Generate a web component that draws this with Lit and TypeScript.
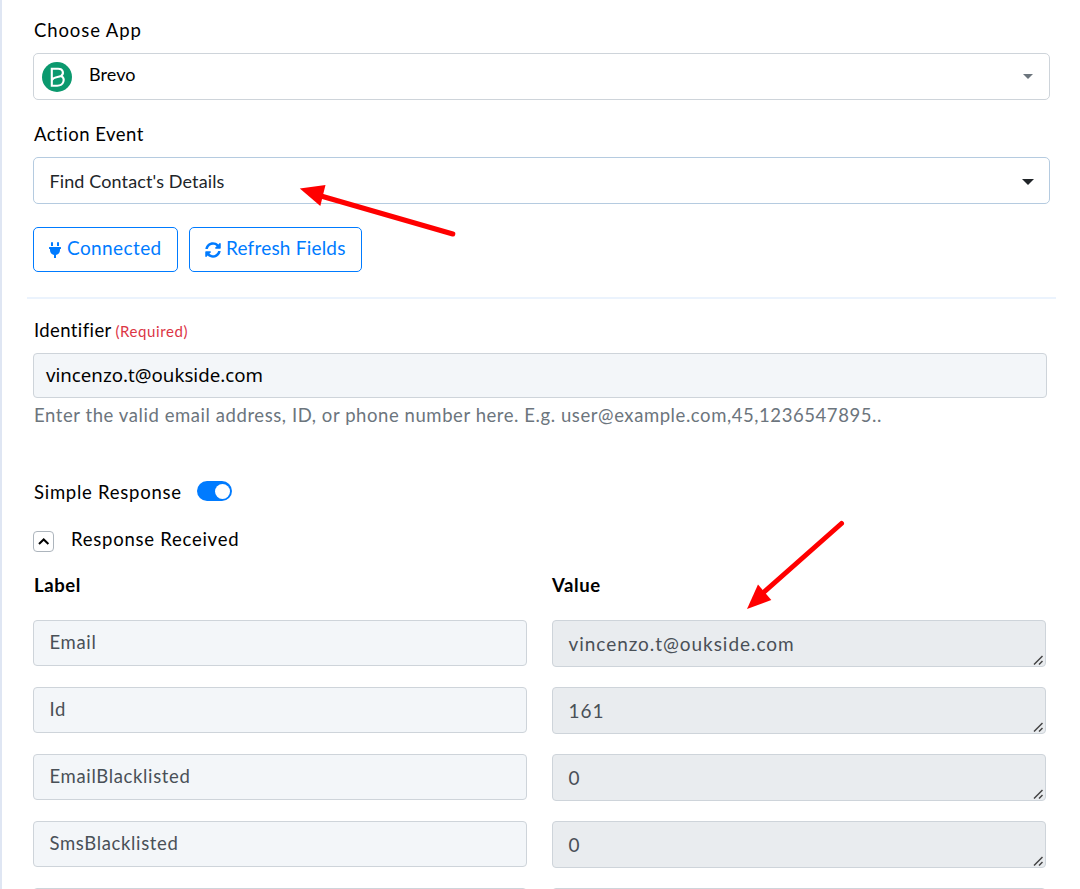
// lit
import { LitElement, html, css, svg } from 'lit';
import { customElement, property } from 'lit/decorators.js';

const RESPONSE = [
  { label: 'Email', value: 'vincenzo.t@oukside.com' },
  { label: 'Id', value: '161' },
  { label: 'EmailBlacklisted', value: '0' },
  { label: 'SmsBlacklisted', value: '0' },
  { label: '', value: '' },
];

// one label / value pair of the response
@customElement('response-row')
export class ResponseRow extends LitElement {
  @property() label = '';
  @property() value = '';

  static styles = css`
    :host {
      display: grid;
      grid-template-columns: 494px 494px;
      column-gap: 25px;
      align-items: start;
      height: 67px;
      color: #495057;
    }
    .label,
    .value {
      box-sizing: border-box;
      border: 1px solid #ced4da;
      border-radius: 4px;
      padding: 0 15.5px;
      white-space: nowrap;
    }
    .label {
      height: 46px;
      line-height: 43px;
      font-size: 18.5px;
      letter-spacing: 0.65px;
      background: #f3f6f9;
    }
    .value {
      position: relative;
      height: 47px;
      line-height: 45px;
      font-size: 19px;
      letter-spacing: 0.95px;
      background: #e9ecef;
    }
    .grip {
      position: absolute;
      right: 2px;
      bottom: 1px;
      width: 10px;
      height: 10px;
    }
  `;

  render() {
    return html`
      <div class="label">${this.label}</div>
      <div class="value">
        ${this.value}
        <svg class="grip" viewBox="0 0 10 10">
          <path d="M1 9.5 9.5 1M6 9.5 9.5 6" fill="none" stroke="#444" stroke-width="1.5" />
        </svg>
      </div>
    `;
  }
}

@customElement('app-root')
export class AppRoot extends LitElement {
  static styles = css`
    :host {
      display: block;
      position: relative;
      box-sizing: border-box;
      height: 889px;
      overflow: hidden;
      padding: 17px 30px 0 31px;
      border-left: 2px solid #dfe6f3;
      background: #fff;
      color: #000;
      font-family: Lato, 'Liberation Sans', sans-serif;
      font-size: 18.5px;
      line-height: 27px;
      letter-spacing: 0.75px;
    }
    .field-label {
      margin-bottom: 9px;
      padding-left: 1px;
      white-space: nowrap;
    }
    .app-label {
      letter-spacing: 0.9px;
    }
    .event-label {
      letter-spacing: 0.5px;
    }
    .identifier-label {
      position: relative;
      top: 1px;
      letter-spacing: 0.4px;
    }
    .required {
      margin-left: -1px;
      font-size: 15px;
      letter-spacing: 0.6px;
      color: #dc3545;
    }
    .select {
      display: flex;
      align-items: center;
      box-sizing: border-box;
      height: 47px;
      margin-bottom: 21px;
      padding: 0 15px 0 8px;
      border: 1px solid #ced4da;
      border-radius: 5px;
    }
    .select.event {
      margin-bottom: 23px;
      padding: 2px 15px 0 15.5px;
      border-color: #b5cbe0;
      color: #212529;
    }
    .select span {
      flex: 1;
    }
    .app-name {
      padding: 0 0 4px 17px;
      font-size: 18px;
      letter-spacing: 0.1px;
    }
    .event-name {
      font-size: 18px;
      letter-spacing: 0.12px;
    }
    .logo {
      width: 30px;
      height: 30px;
    }
    .caret {
      width: 12px;
      height: 6px;
      fill: #6c757d;
    }
    .event .caret {
      fill: #212529;
    }
    .buttons {
      display: flex;
      gap: 11px;
    }
    .btn {
      display: flex;
      align-items: center;
      box-sizing: border-box;
      height: 45px;
      padding: 0 0 3px 15px;
      border: 1px solid #007bff;
      border-radius: 5px;
      color: #007bff;
      font-size: 19px;
      line-height: 26px;
      white-space: nowrap;
    }
    .connected {
      width: 145px;
      letter-spacing: 0.4px;
    }
    .refresh {
      width: 173px;
      padding-left: 14.5px;
      letter-spacing: 0.2px;
    }
    .btn svg {
      height: 16px;
      margin-top: 3px;
      fill: currentColor;
    }
    .plug {
      width: 12px;
      margin-right: 6px;
    }
    .sync {
      width: 16px;
      margin-right: 5.5px;
    }
    .divider {
      height: 2px;
      margin: 25px -6px 17px;
      background: #ebf3fd;
    }
    .input {
      box-sizing: border-box;
      width: 1014px;
      height: 45px;
      padding: 0 12px;
      border: 1px solid #ced4da;
      border-radius: 4px;
      background: #f3f6f9;
      font-family: 'Noto Sans', sans-serif;
      font-size: 18.7px;
      line-height: 42px;
      letter-spacing: 0;
    }
    .help {
      margin-top: 4px;
      padding-left: 1px;
      color: #6c757d;
      letter-spacing: 0.57px;
      white-space: nowrap;
    }
    .simple {
      display: flex;
      align-items: center;
      margin-top: 50px;
      padding-left: 1px;
    }
    .switch {
      box-sizing: border-box;
      width: 35px;
      height: 20px;
      margin: -3px 0 0 15px;
      padding: 3px 2px;
      border-radius: 10px;
      background: #007bff;
      display: flex;
      justify-content: flex-end;
    }
    .knob {
      width: 15px;
      height: 15px;
      border-radius: 50%;
      background: #fff;
    }
    .received {
      display: flex;
      margin-top: 20px;
    }
    .toggle {
      box-sizing: border-box;
      width: 21px;
      height: 21px;
      margin: 5px 17px 0 0;
      border: 1px solid #adb5bd;
      border-radius: 4px;
    }
    .toggle svg {
      display: block;
      width: 19px;
      height: 19px;
    }
    .head {
      display: grid;
      grid-template-columns: 493px 494px;
      column-gap: 25px;
      margin: 19px 0 21px;
      padding-left: 1px;
      font-weight: bold;
      letter-spacing: 0.6px;
    }
    .arrows {
      position: absolute;
      top: 0;
      left: -2px;
      width: 1080px;
      height: 889px;
      pointer-events: none;
    }
  `;

  // red pointer: line from the tail, triangle at the tip
  arrow(line: string, head: string) {
    return svg`
      <path d=${line} fill="none" stroke="#f00" stroke-width="5" stroke-linecap="round" />
      <path d=${head} fill="#f00" />
    `;
  }

  render() {
    return html`
      <div class="field-label app-label">Choose App</div>
      <div class="select">
        <svg class="logo" viewBox="0 0 30 30">
          <circle cx="15" cy="15" r="15" fill="#0b996e" />
          <path
            d="M9.800 6.800h6.400c5 0 6.200 4.800 2.800 7.200 4.800 2.400 2.800 9.700-3.800 9.700H9.800zM9.800 18.500c1.200-4 5.500-3 9.200-4.500"
            fill="none"
            stroke="#fff"
            stroke-width="2.100"
          />
        </svg>
        <span class="app-name">Brevo</span>
        <svg class="caret" viewBox="0 0 12 6"><path d="M1 0h10L6 5z" /></svg>
      </div>

      <div class="field-label event-label">Action Event</div>
      <div class="select event">
        <span class="event-name">Find Contact's Details</span>
        <svg class="caret" viewBox="0 0 12 6"><path d="M0 0h12L6 6z" /></svg>
      </div>

      <div class="buttons">
        <div class="btn connected">
          <svg class="plug" viewBox="0 0 384 512">
            <path d="M320 32a32 32 0 0 0-64 0v96h64zm48 128H16A16 16 0 0 0 0 176v32a16 16 0 0 0 16 16h16v32a160.070 160.070 0 0 0 128 156.800V512h64v-99.200A160.070 160.070 0 0 0 352 256v-32h16a16 16 0 0 0 16-16v-32a16 16 0 0 0-16-16zM128 32a32 32 0 0 0-64 0v96h64z" />
          </svg>
          Connected
        </div>
        <div class="btn refresh">
          <svg class="sync" viewBox="0 0 512 512">
            <path d="M370.720 133.280C339.458 104.008 298.888 87.962 255.848 88c-77.458.068-144.328 53.178-162.791 126.850-1.344 5.363-6.122 9.150-11.651 9.150H24.103c-7.498 0-13.194-6.807-11.807-14.176C33.933 94.924 134.813 8 256 8c66.448 0 126.791 26.136 171.315 68.685L463.030 40.970C478.149 25.851 504 36.559 504 57.941V192c0 13.255-10.745 24-24 24H345.941c-21.382 0-32.090-25.851-16.971-40.971l41.750-41.749zM32 296h134.059c21.382 0 32.090 25.851 16.971 40.971l-41.750 41.750c31.262 29.273 71.835 45.319 114.876 45.280 77.418-.07 144.315-53.144 162.787-126.849 1.344-5.363 6.122-9.150 11.651-9.150h57.304c7.498 0 13.194 6.807 11.807 14.176C478.067 417.076 377.187 504 256 504c-66.448 0-126.791-26.136-171.315-68.685L48.970 471.030C33.851 486.149 8 475.441 8 454.059V320c0-13.255 10.745-24 24-24z" />
          </svg>
          Refresh Fields
        </div>
      </div>

      <div class="divider"></div>

      <div class="field-label identifier-label">
        Identifier <span class="required">(Required)</span>
      </div>
      <div class="input">vincenzo.t@oukside.com</div>
      <div class="help">
        Enter the valid email address, ID, or phone number here. E.g. user@example.com,45,1236547895..
      </div>

      <div class="simple">
        Simple Response
        <div class="switch"><div class="knob"></div></div>
      </div>
      <div class="received">
        <div class="toggle">
          <svg viewBox="0 0 19 19">
            <path d="M5 12 9.700 7.500l4.700 4.500" fill="none" stroke="#000" stroke-width="2" />
          </svg>
        </div>
        Response Received
      </div>

      <div class="head"><span>Label</span><span>Value</span></div>
      ${RESPONSE.map(
        (row) => html`<response-row .label=${row.label} .value=${row.value}></response-row>`
      )}

      <svg class="arrows" viewBox="0 0 1080 889">
        ${this.arrow('M321 196 452.800 234', 'M299.800 188.500 325.500 185 320.300 206z')}
        ${this.arrow('M763 593 841.500 523.500', 'M747 609 758 584.500 771.300 600z')}
      </svg>
    `;
  }
}
